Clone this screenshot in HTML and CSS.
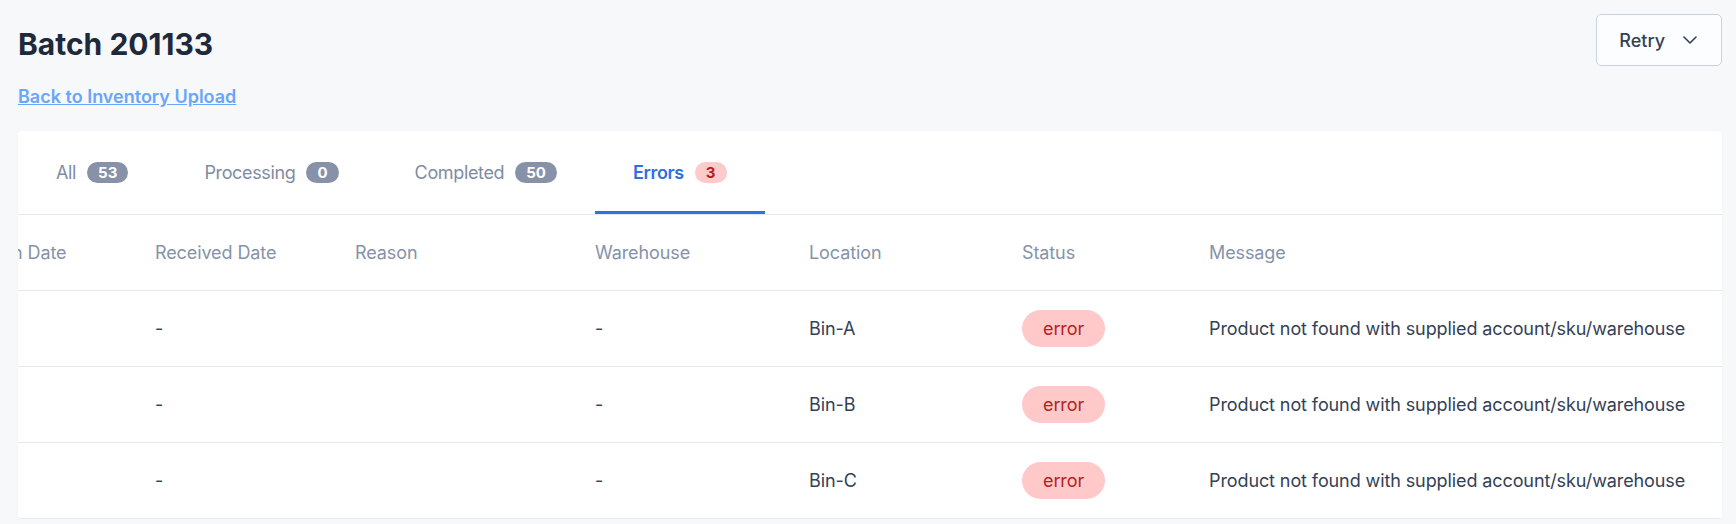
FILE: index.html
```html
<!DOCTYPE html>
<html>
<head>
    <title>Batch 201133</title>
    <link rel="stylesheet" href="styles.css">
</head>
<body>
    <div class="page">
        <div class="page-header">
            <div>
                <h1 class="page-title">Batch 201133</h1>
                <a class="back-link" href="#">Back to Inventory Upload</a>
            </div>
            <button class="retry-button">
                Retry
                <svg width="14" height="8" viewBox="0 0 14 8" fill="none">
                    <path d="M1 1l6 6 6-6" stroke="#334155" stroke-width="1.6" stroke-linecap="round" stroke-linejoin="round"/>
                </svg>
            </button>
        </div>

        <div class="card">
            <div class="tabs">
                <div class="tab">All <span class="count">53</span></div>
                <div class="tab">Processing <span class="count">0</span></div>
                <div class="tab">Completed <span class="count">50</span></div>
                <div class="tab active">Errors <span class="count count-error">3</span></div>
            </div>

            <div class="table-scroll" id="tableScroll">
                <table class="items">
                    <colgroup>
                        <col style="width: 216px">
                        <col style="width: 200px">
                        <col style="width: 240px">
                        <col style="width: 214px">
                        <col style="width: 213px">
                        <col style="width: 187px">
                        <col style="width: 560px">
                    </colgroup>
                    <thead>
                        <tr>
                            <th>Expiration Date</th>
                            <th>Received Date</th>
                            <th>Reason</th>
                            <th>Warehouse</th>
                            <th>Location</th>
                            <th>Status</th>
                            <th>Message</th>
                        </tr>
                    </thead>
                    <tbody>
                        <tr>
                            <td></td>
                            <td>-</td>
                            <td></td>
                            <td>-</td>
                            <td>Bin-A</td>
                            <td><span class="status status-error">error</span></td>
                            <td>Product not found with supplied account/sku/warehouse</td>
                        </tr>
                        <tr>
                            <td></td>
                            <td>-</td>
                            <td></td>
                            <td>-</td>
                            <td>Bin-B</td>
                            <td><span class="status status-error">error</span></td>
                            <td>Product not found with supplied account/sku/warehouse</td>
                        </tr>
                        <tr>
                            <td></td>
                            <td>-</td>
                            <td></td>
                            <td>-</td>
                            <td>Bin-C</td>
                            <td><span class="status status-error">error</span></td>
                            <td>Product not found with supplied account/sku/warehouse</td>
                        </tr>
                    </tbody>
                </table>
            </div>
        </div>
    </div>

    <script>
        // Tabela rolada horizontalmente
        document.getElementById('tableScroll').scrollLeft = 103;
    </script>
</body>
</html>
```

FILE: styles.css
```css
body {
    margin: 0;
    font-family: Inter, "Noto Sans", sans-serif;
    background-color: #f7f8fa;
    color: #334155;
}
.page {
    padding: 14px 14px 0 18px;
}
.page-header {
    display: flex;
    justify-content: space-between;
    align-items: flex-start;
}
.page-title {
    margin: 12px 0 0 0;
    font-size: 30px;
    font-weight: 700;
    color: #1e293b;
    line-height: 36px;
}
.back-link {
    display: inline-block;
    margin-top: 24px;
    font-size: 18px;
    font-weight: 600;
    color: #6aa5f8;
    text-decoration: underline;
    line-height: 22px;
}
.retry-button {
    display: flex;
    align-items: center;
    gap: 18px;
    height: 52px;
    padding: 0 24px 0 22px;
    background: #fcfdff;
    border: 1px solid #c8d3e6;
    border-radius: 5px;
    font-family: inherit;
    font-size: 18px;
    font-weight: 500;
    color: #334155;
    cursor: pointer;
}
.card {
    margin-top: 23px;
    background: white;
    border-radius: 4px;
    box-shadow: 0 1px 3px rgba(15,23,42,0.04);
    overflow: hidden;
}
.tabs {
    display: flex;
    height: 83px;
    border-bottom: 1px solid #e3e9f2;
}
.tab {
    display: flex;
    align-items: center;
    gap: 11px;
    padding: 2px 38px 0 38px;
    font-size: 18px;
    letter-spacing: -0.35px;
    color: #7f8ca3;
    border-bottom: 3px solid transparent;
}
.tab.active {
    color: #2f6fdf;
    font-weight: 600;
    border-bottom-color: #2f72e0;
}
.count {
    display: inline-block;
    min-width: 9px;
    padding: 0 11px;
    height: 21px;
    line-height: 21px;
    border-radius: 11px;
    background: #8792a8;
    color: white;
    font-size: 15px;
    font-weight: 700;
    letter-spacing: 0;
    text-align: center;
}
.count-error {
    background: #fecaca;
    color: #b91c1c;
}
.table-scroll {
    overflow: hidden;
}
.items {
    table-layout: fixed;
    width: 1830px;
    border-collapse: collapse;
}
.items th,
.items td {
    height: 75px;
    padding: 0 24px;
    text-align: left;
    font-size: 18px;
    letter-spacing: -0.1px;
    white-space: nowrap;
    border-bottom: 1px solid #e3e9f2;
}
.items th {
    font-weight: 400;
    color: #8593a9;
}
.items td {
    color: #334155;
}
.status {
    display: inline-block;
    height: 37px;
    line-height: 37px;
    padding: 0 21px;
    border-radius: 19px;
}
.status-error {
    background: #ffc9c9;
    color: #b42323;
}
```
